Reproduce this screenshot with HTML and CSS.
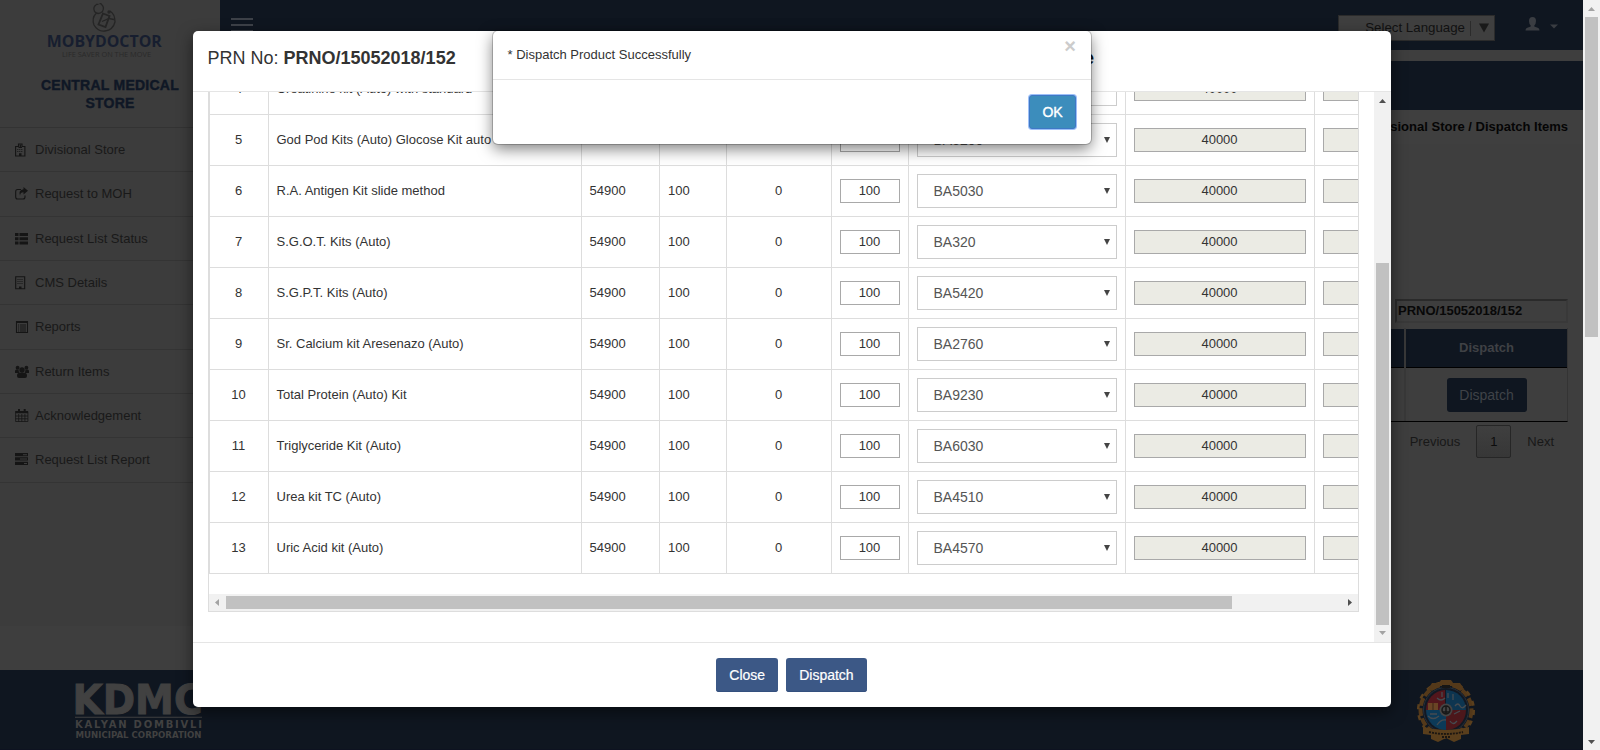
FILE: index.html
```html
<!DOCTYPE html>
<html lang="en">
<head>
<meta charset="utf-8">
<title>Dispatch Items</title>
<link rel="stylesheet" href="styles.css">
</head>
<body>
<div class="app">
  <div class="page">
    <div class="upper">
      <aside class="sidebar">
        <div class="brand">
          <svg width="130" height="64" viewBox="40 0 130 64">
            <g fill="none" stroke="#252525" stroke-width="1.3">
              <path d="M96.500 4.500Q92.500 7 94.500 11.500Q98 15.500 102.500 11.500Q105 7 101 4M96 4.300h2.500M99.500 3.600h2"/>
              <path d="M96 13.500Q91.500 18 94 25Q98 32 105 31Q113 30 115 22Q115 14 110 11"/>
              <path d="M103 13.500L109.500 16L105.500 27L98.500 24.500Z" stroke-width="1.8"/>
              <path d="M102 21.500L109 18.500L114 19.500"/>
              <circle cx="109" cy="12" r="1"/>
            </g>
            <text x="46.800" y="47.200" class="logo-name" textLength="115" lengthAdjust="spacingAndGlyphs">MOBYDOCTOR</text>
            <text x="62" y="57" class="logo-tag" textLength="89" lengthAdjust="spacingAndGlyphs">LIFE SAVER ON THE MOVE</text>
          </svg>
        </div>
        <div class="role">CENTRAL MEDICAL<br>STORE</div>
        <nav class="menu">
          <a class="item"><svg class="ico" viewBox="0 0 14 14"><path d="M.6 3.500h2.900V1h3.500v2.500h2.900v9.500H.6zM3.500 4.500h3.500" class="ln"/><path d="M2.300 6h1v1h-1zm2 0h1v1h-1zm2 0h1v1h-1zM2.300 8h1v1h-1zm2 0h1v1h-1zm2 0h1v1h-1zM4 10.300h2.500V13H4zM4.700 1.500h1.200v2.500H4.700z"/></svg>Divisional Store</a>
          <a class="item"><svg class="ico" viewBox="0 0 14 14"><path d="M6 2.500H2.600Q.7 2.500.7 4.500v5.500q0 2 1.900 2h5.400q2 0 2-2V8.500" class="ln"/><path d="M8.500 0L13 3.700 8.500 7.400V5.200Q5.500 5 5 8.500 3 3 8.500 2.300z"/></svg>Request to MOH</a>
          <a class="item"><svg class="ico" viewBox="0 0 14 14"><path d="M0 1h3.500v3H0zm4.500 0H13v3H4.500zM0 5.200h3.500v3H0zm4.500 0H13v3H4.500zM0 9.500h3.500v3H0zm4.500 0H13v3H4.500z"/></svg>Request List Status</a>
          <a class="item"><svg class="ico" viewBox="0 0 14 14"><path d="M.7.700h9v12h-9z" class="ln"/><path d="M2.500 3h1v1h-1zm2 0h1v1h-1zm2 0h1v1h-1zM2.500 5h1v1h-1zm2 0h1v1h-1zm2 0h1v1h-1zM2.500 7h1v1h-1zm2 0h1v1h-1zm2 0h1v1h-1zM4 10.500h2.500V13H4z"/></svg>CMS Details</a>
          <a class="item"><svg class="ico" viewBox="0 0 14 14"><path d="M1.500 1.500h11v11h-11z" class="ln"/><path d="M1 1h12v2H1zM3 4.500h1.200v1H3zm2 0h6v1H5zm-2 2h1.200v1H3zm2 0h6v1H5zm-2 2h1.200v1H3zm2 0h6v1H5zm-2 2h1.200v1H3zm2 0h6v1H5z"/></svg>Reports</a>
          <a class="item"><svg class="ico" viewBox="0 0 14 14"><circle cx="2.600" cy="2.700" r="1.900"/><circle cx="11.400" cy="2.700" r="1.900"/><circle cx="7" cy="5" r="2.700"/><path d="M0 8V6q0-1.600 1.500-1.600h2Q3.500 7 5 8zM14 8V6q0-1.600-1.500-1.600h-2Q10.500 7 9 8zM2 11q0-3.300 2.500-3.300h5Q12 7.700 12 11q0 2-2 2H4q-2 0-2-2z"/></svg>Return Items</a>
          <a class="item"><svg class="ico" viewBox="0 0 14 14"><path d="M.6 2.500h12.300v10H.6zM.6 7h12.300M.6 9.800h12.300M3.700 5v7.500M6.800 5v7.500M9.900 5v7.500" class="ln thin"/><path d="M.5 2h12.500v2.300H.5zM3 0h2v3H3zm5.700 0h2v3h-2z"/></svg>Acknowledgement</a>
          <a class="item"><svg class="ico" viewBox="0 0 14 14"><path d="M0 0h13v3.300H0zm0 4.300h13v3.300H0zm0 4.400h13V12H0z"/><path d="M8 1.200h4v1H8zM5 5.500h7v1H5zM9 9.900h3v1H9z" fill="#3d3d3d"/></svg>Request List Report</a>
        </nav>
      </aside>
      <div class="main">
        <header class="topbar">
          <div class="burger"><i></i><i></i><i></i></div>
          <div class="tools">
            <div class="lang"><span>Select Language</span><b></b><svg width="10" height="10" viewBox="0 0 10 10"><path d="M0 .5h10L5 9.500z" fill="#191919"/></svg></div>
            <svg class="user" width="15" height="14" viewBox="0 0 15 14"><path d="M4 4q0-4 3.500-4T11 4q0 3-1.700 4.500V9.500l4 1.500q1.200.5 1.200 2.500H.5q0-2 1.200-2.500l4-1.500V8.500Q4 7 4 4z" fill="#3a3d42"/></svg>
            <svg width="8" height="5" viewBox="0 0 8 5"><path d="M0 .5h8l-4 4z" fill="#3a3d42"/></svg>
          </div>
        </header>
        <div class="title-strip"></div>
        <div class="crumb">Divisional Store / Dispatch Items</div>
        <div class="grid-area">
          <div class="filter">PRNO/15052018/152</div>
          <div class="grid">
            <div class="gh"></div><div class="gh">Dispatch</div>
            <div class="gc"></div><div class="gc"><span class="gbtn">Dispatch</span></div>
          </div>
          <div class="pager"><span>Previous</span><span class="cur">1</span><span>Next</span></div>
        </div>
      </div>
    </div>
    <footer class="footer">
      <svg width="132" height="62" viewBox="72 680 132 62">
        <g fill="#414141" class="kd">
          <text x="72.500" y="713.500" font-size="40" textLength="130" lengthAdjust="spacingAndGlyphs" stroke="#414141" stroke-width="1">KDMC</text>
          <path d="M75 716.800h127v1H75z"/>
          <text x="75" y="728" font-size="10" textLength="127">KALYAN DOMBIVLI</text>
          <text x="75.500" y="738" font-size="8.500" textLength="126" lengthAdjust="spacingAndGlyphs">MUNICIPAL CORPORATION</text>
        </g>
      </svg>
      <svg width="64" height="66" viewBox="0 0 64 66">
        <circle cx="32" cy="33" r="25.500" fill="none" stroke="#54391a" stroke-width="4" stroke-dasharray="8 2.500"/>
        <circle cx="32" cy="33" r="27.800" fill="none" stroke="#5a3f1d" stroke-width="2.500" stroke-dasharray="5 6"/>
        <circle cx="32" cy="33" r="22.500" fill="#121822" stroke="#27303a" stroke-width="1"/>
        <path d="M31 33V13A20 20 0 0 0 12 33z" fill="#52161c"/><path d="M32 33V13A20 20 0 0 1 52 33z" fill="#0d3550"/>
        <path d="M32 33H52A20 20 0 0 1 32 53z" fill="#4c171b"/><path d="M32 33H12A20 20 0 0 0 32 53z" fill="#0c3a58"/>
        <path d="M14 26h10v7H14z" fill="#6a4425"/><path d="M19 26v7" stroke="#3a2415"/>
        <path d="M23 21q4 4 8 0M28 15v5M34 16v5M39 17v6M41 29q3-4 5 0t6-1M14 39q5 5 11 0M16 37h7M23 48q4-6 9-5M40 37l6-3M36 44q3 5 7 0" fill="none" stroke="#454b50" stroke-width="1.300"/>
        <circle cx="32" cy="33" r="6.500" fill="#454545"/><circle cx="32" cy="33" r="4" fill="none" stroke="#171717" stroke-width="1.500"/><path d="M32 29v8M29 35h6" stroke="#171717" stroke-width="1.500"/>
        <path d="M27 3h10l2 3h7l4 6-4 2-6-5H24l-6 5-4-2 4-6h7z" fill="#54391a"/><path d="M28 8h8v3h-8z" fill="#151515"/>
        <path d="M9 50q23 6 46 0v7l-8 1v4l-7 3-8-4-8 4-7-3v-4l-8-1z" fill="#593e1c"/>
        <path d="M15 55q17 4 34 0M28 60h9" fill="none" stroke="#1c1611" stroke-width="1.800" stroke-dasharray="2 1"/>
      </svg>
    </footer>
  </div>
  <div class="vbar pagebar">
    <svg width="17" height="17"><path d="M5 11h7L8.500 7z" fill="#a3a3a3"/></svg>
    <div class="thumb"></div>
    <svg class="end" width="17" height="17"><path d="M5 7h7l-3.500 4z" fill="#505050"/></svg>
  </div>
</div>

<section class="modal">
  <header class="m-head"><div>PRN No: <strong>PRNO/15052018/152</strong></div><strong class="m-right">Divisional Store</strong></header>
  <div class="m-body">
    <div class="m-content">
      <div class="frame">
        <div class="rows">
          <div class="row"><div>4</div><div>Creatinine kit (Auto) with standard</div><div>54900</div><div>100</div><div>0</div><div><span class="inp">100</span></div><div><span class="sel">BA2340</span></div><div><span class="inp ro">40000</span></div><div><span class="inp ro"></span></div></div>
          <div class="row"><div>5</div><div>God Pod Kits (Auto) Glocose Kit auto</div><div>54900</div><div>100</div><div>0</div><div><span class="inp">100</span></div><div><span class="sel">BA5200</span></div><div><span class="inp ro">40000</span></div><div><span class="inp ro"></span></div></div>
          <div class="row"><div>6</div><div>R.A. Antigen Kit slide method</div><div>54900</div><div>100</div><div>0</div><div><span class="inp">100</span></div><div><span class="sel">BA5030</span></div><div><span class="inp ro">40000</span></div><div><span class="inp ro"></span></div></div>
          <div class="row"><div>7</div><div>S.G.O.T. Kits (Auto)</div><div>54900</div><div>100</div><div>0</div><div><span class="inp">100</span></div><div><span class="sel">BA320</span></div><div><span class="inp ro">40000</span></div><div><span class="inp ro"></span></div></div>
          <div class="row"><div>8</div><div>S.G.P.T. Kits (Auto)</div><div>54900</div><div>100</div><div>0</div><div><span class="inp">100</span></div><div><span class="sel">BA5420</span></div><div><span class="inp ro">40000</span></div><div><span class="inp ro"></span></div></div>
          <div class="row"><div>9</div><div>Sr. Calcium kit Aresenazo (Auto)</div><div>54900</div><div>100</div><div>0</div><div><span class="inp">100</span></div><div><span class="sel">BA2760</span></div><div><span class="inp ro">40000</span></div><div><span class="inp ro"></span></div></div>
          <div class="row"><div>10</div><div>Total Protein (Auto) Kit</div><div>54900</div><div>100</div><div>0</div><div><span class="inp">100</span></div><div><span class="sel">BA9230</span></div><div><span class="inp ro">40000</span></div><div><span class="inp ro"></span></div></div>
          <div class="row"><div>11</div><div>Triglyceride Kit (Auto)</div><div>54900</div><div>100</div><div>0</div><div><span class="inp">100</span></div><div><span class="sel">BA6030</span></div><div><span class="inp ro">40000</span></div><div><span class="inp ro"></span></div></div>
          <div class="row"><div>12</div><div>Urea kit TC (Auto)</div><div>54900</div><div>100</div><div>0</div><div><span class="inp">100</span></div><div><span class="sel">BA4510</span></div><div><span class="inp ro">40000</span></div><div><span class="inp ro"></span></div></div>
          <div class="row"><div>13</div><div>Uric Acid kit (Auto)</div><div>54900</div><div>100</div><div>0</div><div><span class="inp">100</span></div><div><span class="sel">BA4570</span></div><div><span class="inp ro">40000</span></div><div><span class="inp ro"></span></div></div>
        </div>
        <div class="hbar">
          <svg width="17" height="17"><path d="M10 5v7L6 8.500z" fill="#a3a3a3"/></svg>
          <div class="thumb"></div>
          <svg class="end" width="17" height="17"><path d="M7 5v7l4-3.500z" fill="#505050"/></svg>
        </div>
      </div>
    </div>
    <div class="vbar bodybar">
      <svg width="17" height="17"><path d="M5 11h7L8.500 7z" fill="#505050"/></svg>
      <div class="thumb"></div>
      <svg width="17" height="17"><path d="M5 6h7l-3.500 4z" fill="#a3a3a3"/></svg>
    </div>
  </div>
  <footer class="m-foot"><span class="btn">Close</span><span class="btn">Dispatch</span></footer>
</section>

<section class="alert">
  <div class="a-head"><span>* Dispatch Product Successfully</span><span class="x">×</span></div>
  <div class="a-foot"><span class="ok">OK</span></div>
</section>
</body>
</html>
```

FILE: styles.css
```css
* { box-sizing: border-box; }
body {
  margin: 0;
  width: 1600px;
  height: 750px;
  overflow: hidden;
  font: 13px/18px "Liberation Sans", Arial, sans-serif;
  color: #333;
  background: #3e3e3e;
}
svg { display: block; flex: none; }

/* page behind the dialogs */
.app { display: flex; height: 750px; }
.page { width: 1583px; display: flex; flex-direction: column; }
.upper { display: flex; height: 670px; }
.sidebar { width: 220px; height: 626px; background: #3c3c3c; color: #191919; flex: none; }
.brand { height: 76px; padding-left: 40px; }
.logo-name { font: bold 16px "Open Sans", sans-serif; fill: #171e2f; }
.logo-tag { font: 7.5px "Open Sans", sans-serif; fill: #2a2a2a; }
.role {
  height: 52px;
  border-bottom: 1px solid #333;
  text-align: center;
  font-weight: bold;
  font-size: 14px;
  letter-spacing: .25px;
  color: #0f1725;
  -webkit-text-stroke: .4px #0f1725;
}
.item {
  display: flex;
  align-items: center;
  height: 44.33px;
  padding: 1px 0 0 15px;
  border-bottom: 1px solid #343434;
}
.ico { width: 14px; height: 14px; margin-right: 6px; fill: #151515; }
.ln { fill: none; stroke: #151515; stroke-width: 1.1; }
.thin { stroke-width: .8; }
.main { flex: 1; }
.topbar {
  height: 50px;
  background: #0f1620;
  display: flex;
  justify-content: space-between;
  padding: 0 25px 0 11px;
}
.burger { padding-top: 18px; display: grid; gap: 4px; align-content: start; }
.burger i { width: 22px; height: 2px; background: #3d4148; }
.tools { display: flex; align-items: flex-start; }
.lang {
  display: flex;
  align-items: center;
  justify-content: flex-end;
  width: 157px;
  height: 26px;
  margin-top: 15px;
  padding-right: 5px;
  background: #3f3f3f;
  border: 1px solid #2b2b2b;
  color: #111;
  font-size: 13.3px;
}
.lang b { width: 1px; height: 15px; background: #2b2b2b; margin: 0 8px 0 5px; }
.user { margin: 17px 10px 0 30px; }
.tools > svg:last-child { margin-top: 24px; }
.title-strip { height: 49px; margin-top: 11px; background: #0f1620; }
.crumb { height: 34px; padding: 8px 15px 0 0; text-align: right; font-weight: bold; color: #050505; background: #3f3f3f; }
.grid-area { padding: 155px 15px 0 0; display: flex; flex-direction: column; align-items: flex-end; }
.filter {
  width: 173px;
  height: 24px;
  padding: 1px;
  border: 2px solid;
  border-color: #2a2a2a #393939 #393939 #2a2a2a;
  font-weight: bold;
  color: #080808;
}
.grid {
  display: grid;
  grid-template-columns: 160px 161px;
  grid-template-rows: 40px 53px;
  column-gap: 2px;
  margin-top: 5px;
  border-bottom: 1px solid #000;
  border-right: 1px solid #343434;
  background: #383838;
}
.gh { background: #0f1620; color: #3f4145; font-weight: bold; border-bottom: 1px solid #000; border-top: 1px solid #3e3e3e; }
.gc { background: #3e3e3e; }
.gh, .gc { display: flex; align-items: center; justify-content: center; }
.gbtn { width: 80px; height: 34px; line-height: 34px; text-align: center; font-size: 14px; border-radius: 3px; background: #0f1620; color: #3f4348; }
.pager { display: flex; align-items: center; height: 33px; margin-top: 3px; padding-right: 14px; color: #181818; }
.pager .cur {
  width: 35px;
  height: 33px;
  line-height: 31px;
  margin: 0 16px;
  text-align: center;
  border: 1px solid #262626;
  border-radius: 2px;
  background: linear-gradient(#3f3f3f, #373737);
  color: #0c0c0c;
}
.footer {
  height: 80px;
  background: #0f1620;
  display: flex;
  justify-content: space-between;
  padding: 10px 105px 0 72px;
  border-bottom: 1px solid #0d1220;
}
.footer > svg:last-child { margin-top: -3px; }
.kd { font-family: "DejaVu Sans", sans-serif; font-weight: bold; }

/* scrollbars */
.vbar { width: 17px; background: #f1f1f1; display: flex; flex-direction: column; }
.thumb { background: #c1c1c1; flex: none; }
.vbar .thumb { width: 13px; margin-left: 2px; }
.pagebar .thumb { height: 320px; }
.vbar .end { margin-top: auto; }
.bodybar .thumb { height: 362px; margin-top: 154px; }
.hbar { display: flex; height: 17px; background: #f1f1f1; }
.hbar .thumb { width: 1006px; height: 13px; margin-top: 2px; }
.hbar .end { margin-left: auto; }

/* dispatch dialog */
.modal {
  position: absolute;
  left: 193px;
  top: 31px;
  width: 1198px;
  height: 676px;
  display: flex;
  flex-direction: column;
  background: #fff;
  border-radius: 5px;
  box-shadow: 0 5px 15px rgba(0, 0, 0, .5);
}
.m-head {
  height: 61px;
  padding: 15px 15px 15px 14.5px;
  border-bottom: 1px solid #e5e5e5;
  font-size: 18px;
  line-height: 25px;
  display: flex;
  justify-content: space-between;
}
.m-right { padding-right: 282px; color: #111; }
.m-body { display: flex; height: 550px; overflow: hidden; }
.m-content { width: 1181px; padding: 0 15px 30px; }
.frame {
  height: 520px;
  border: 1px solid #ddd;
  border-top: 0;
  overflow: hidden;
  display: flex;
  flex-direction: column;
  justify-content: flex-end;
}
.rows { width: 1300px; border-left: 1px solid #ddd; margin-bottom: 20px; }
.row {
  display: grid;
  grid-template-columns: 59px 313px 78px 67px 105px 77px 217px 189px 189px;
  height: 51px;
  border-bottom: 1px solid #ddd;
}
.row > div { display: flex; align-items: center; padding: 0 8px; border-right: 1px solid #ddd; }
.row > div:nth-child(2), .row > div:nth-child(3) { padding-left: 7.5px; }
.row > div:nth-child(1), .row > div:nth-child(5) { justify-content: center; padding-right: 9px; }
.inp {
  flex: 1;
  height: 24px;
  line-height: 21px;
  border: 1px solid #a9a9a9;
  text-align: center;
  padding-right: 1px;
}
.ro { background: #ebebe4; }
.sel {
  position: relative;
  flex: 1;
  height: 34px;
  line-height: 33px;
  padding-left: 15.5px;
  border: 1px solid #ccc;
  font-size: 14px;
  color: #555;
}
.sel::after {
  content: "";
  position: absolute;
  right: 6px;
  top: 13px;
  border: 3px solid transparent;
  border-top: 6px solid #444;
  border-bottom: 0;
}
.m-foot {
  flex: 1;
  display: flex;
  justify-content: center;
  gap: 8px;
  padding: 15px 1px 0 0;
  border-top: 1px solid #e5e5e5;
}
.btn {
  height: 34px;
  padding: 0 13px;
  line-height: 34px;
  font-size: 14px;
  border-radius: 3px;
  color: #fff;
  background: #3c5886;
  box-shadow: inset 0 -1px #34507e;
  -webkit-text-stroke: .2px #fff;
}

/* message dialog */
.alert {
  position: absolute;
  left: 493px;
  top: 31px;
  width: 598px;
  height: 113px;
  background: #fff;
  border-radius: 5px;
  box-shadow: 0 0 0 1px rgba(0, 0, 0, .2), 0 5px 15px rgba(0, 0, 0, .5);
}
.a-head {
  display: flex;
  justify-content: space-between;
  height: 49px;
  padding: 15px 15px 0 14.5px;
  border-bottom: 1px solid #e5e5e5;
}
.x { font-size: 20px; font-weight: bold; line-height: 20px; margin-top: -10px; color: #ccc; }
.a-foot { display: flex; justify-content: flex-end; padding: 15px; }
.ok {
  width: 47px;
  height: 34px;
  line-height: 33px;
  text-align: center;
  font-size: 14px;
  color: #fff;
  background: #3c8dbc;
  border: 1px solid #3f78c5;
  border-radius: 3px;
  box-shadow: 0 0 0 1px #9dc0f8;
  -webkit-text-stroke: .4px #fff;
}
```
